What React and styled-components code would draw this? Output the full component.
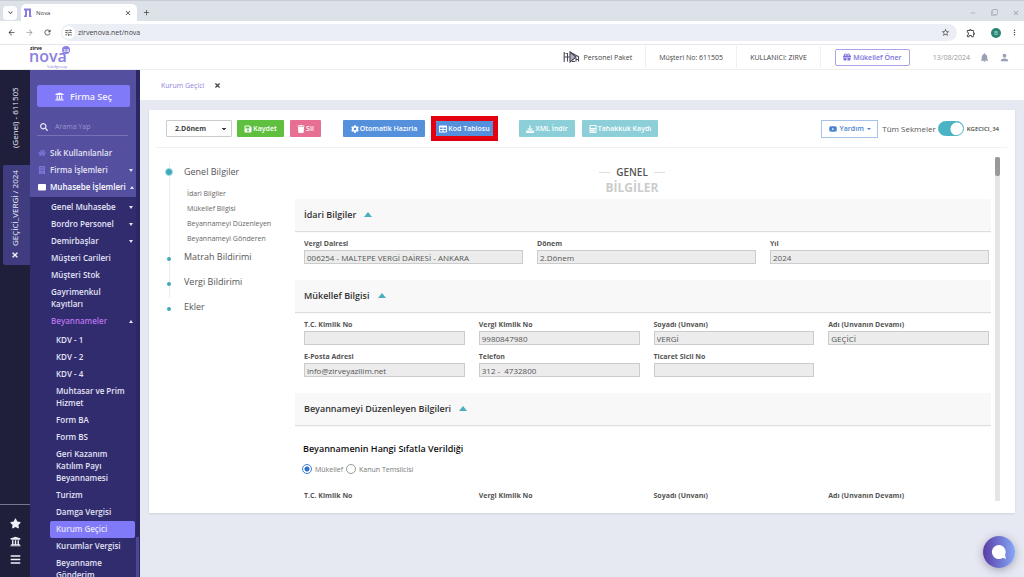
import React from 'react'
import styled, { createGlobalStyle } from 'styled-components'
import {
  FaUniversity, FaSearch, FaHome, FaBuilding, FaSave, FaTrash, FaCog, FaTable, FaYoutube,
  FaGift, FaStar, FaBars, FaTimes, FaCalculator
} from 'react-icons/fa'
import {
  MdArrowBack, MdArrowForward, MdRefresh, MdKeyboardArrowDown, MdClose, MdAdd, MdRemove,
  MdFilterNone, MdStarBorder, MdOutlineExtension, MdMoreVert, MdTune, MdNotifications, MdPerson
} from 'react-icons/md'
import { FaDownload } from 'react-icons/fa6'

const GlobalStyle = createGlobalStyle`
  * {
    box-sizing: border-box;
  }
  body {
    margin: 0;
    font-family: 'Open Sans', sans-serif;
    color: #555;
  }
  button, input, select {
    font-family: inherit;
    margin: 0;
  }
  button {
    cursor: pointer;
    padding: 0;
    border: 0;
    background: none;
    color: inherit;
    white-space: nowrap;
  }
  a {
    color: inherit;
    text-decoration: none;
  }
  svg {
    flex: none;
  }
`

const Page = styled.div`
  display: flex;
  flex-direction: column;
  height: 100vh;
  overflow: hidden;
  background: #e6e9f2;
`

/* browser window */

const TabStrip = styled.div`
  display: flex;
  align-items: center;
  height: 21px;
  padding: 3px 4px 0 3px;
  background: #dde1e8;
  border-top: 1px solid #c9cdd3;
  color: #444;
`

const TabSearch = styled.button`
  display: flex;
  align-items: center;
  justify-content: center;
  width: 14px;
  height: 14px;
  margin-right: 4px;
  border-radius: 4px;
  background: #fdfdff;
  font-size: 9px;
`

const BrowserTab = styled.div`
  display: flex;
  align-items: center;
  gap: 4px;
  width: 116px;
  height: 17px;
  padding: 0 5px 0 3px;
  border-radius: 5px 5px 0 0;
  background: #fff;
  font-size: 6px;

  span {
    flex: 1;
  }
`

const StripButton = styled.button`
  display: flex;
  font-size: ${props => props.size || 9}px;
  color: ${props => props.muted ? '#9a9ea6' : '#444'};
`

const WindowControls = styled.div`
  display: flex;
  gap: 14px;
  margin-left: auto;
`

const NewTab = styled(StripButton)`
  margin-left: 5px;
`

const AddressBar = styled.div`
  display: flex;
  align-items: center;
  gap: 9px;
  height: 24px;
  padding: 0 5px 0 7px;
  background: #fff;
  border-bottom: 1px solid #e4e6ea;
`

const Address = styled.div`
  display: flex;
  align-items: center;
  flex: 1;
  gap: 3px;
  height: 17px;
  padding: 0 7px 0 1px;
  border-radius: 9px;
  background: #eceef6;
  color: #555;
`

const SiteInfo = styled.button`
  display: flex;
  padding: 2px;
  border-radius: 50%;
  background: #fff;
  font-size: 9px;
`

const UrlInput = styled.input`
  flex: 1;
  padding: 0;
  border: 0;
  background: none;
  font-size: 7px;
  color: #444;
`

const Profile = styled.button`
  width: 10px;
  height: 10px;
  margin-left: 6px;
  border-radius: 50%;
  background: #2a8574;
  font-size: 6px;
  line-height: 10px;
  color: #bfe3da;
`

/* application header */

const Header = styled.header`
  display: flex;
  align-items: center;
  flex: none;
  height: 25px;
  padding: 0 14px 0 28px;
  background: #fff;
  border-bottom: 1px solid #eee;
  font-size: 7px;
`

const HeaderItem = styled.div`
  display: flex;
  align-items: center;
  gap: 4px;
  height: 22px;
  padding: 0 13px;
  border-right: 1px solid #f0f0f0;
  color: #444;
`

const Spacer = styled.div`
  flex: 1;
`

const Suggest = styled.button`
  display: flex;
  align-items: center;
  justify-content: center;
  gap: 2px;
  width: 75px;
  height: 17px;
  margin: 0 23px 0 14px;
  border: 1px solid #a9a4e8;
  border-radius: 2px;
  font-size: 7px;
  font-weight: 600;
  color: #7a72de;

  svg {
    font-size: 8px;
  }
`

const Today = styled.span`
  margin-right: 9px;
  color: #999;
`

const HeaderIcon = styled.button`
  display: flex;
  margin-left: ${props => props.gap || 0}px;
  font-size: 11px;
  color: #9aa0b2;
`

/* left side */

const Body = styled.div`
  display: flex;
  flex: 1;
  min-height: 0;
`

const Rail = styled.aside`
  display: flex;
  flex-direction: column;
  flex: none;
  width: 30px;
  background: #201f3b;
  color: #f0f0f8;
`

const RailTab = styled.div`
  display: flex;
  align-items: center;
  justify-content: center;
  gap: 5px;
  height: ${props => props.active ? 100 : 95}px;
  margin-left: 3px;
  padding-left: 3px;
  border-radius: 0 2px 2px 0;
  background: ${props => props.active ? '#403c80' : 'none'};
  writing-mode: vertical-rl;
  transform: rotate(180deg);
  font-size: 8px;
  line-height: 12px;
`

const RailTools = styled.div`
  display: flex;
  flex-direction: column;
  align-items: center;
  gap: 7px;
  height: 73px;
  margin-top: auto;
  padding-top: 13px;
  border-top: 1px solid #77768c;
`

const RailButton = styled.button`
  display: flex;
  font-size: 11px;
`

const Sidebar = styled.nav`
  display: flex;
  flex: none;
  width: 110px;
  background: #302c6e;
  color: #e4e3f5;
  font-size: 8px;
  font-weight: 600;
`

const Menu = styled.div`
  flex: 1;
  min-width: 0;
  overflow: hidden;
`

const MenuTrack = styled.div`
  display: flex;
  align-items: flex-end;
  width: 4px;
  background: #2a2762;
`

const MenuThumb = styled.div`
  width: 3px;
  height: 40px;
  background: #4c4891;
`

const MenuTop = styled.div`
  padding: 15px 0 1px;
  background: #544f9e;
`

const PickCompany = styled.button`
  display: flex;
  align-items: center;
  justify-content: center;
  gap: 6px;
  width: 93px;
  height: 22px;
  margin-left: 7px;
  border-radius: 2px;
  background: #8079f8;
  font-size: 9px;
  font-weight: 600;
  color: #f3f2ff;
`

const SearchBox = styled.label`
  display: flex;
  align-items: center;
  gap: 7px;
  width: 91px;
  height: 18px;
  margin: 11px 0 9px 7px;
  padding: 0 3px;
  border-bottom: 1px solid #7772b8;

  input {
    flex: 1;
    min-width: 0;
    padding: 0;
    border: 0;
    background: none;
    font-size: 7px;
    color: #fff;
  }
  input::placeholder {
    color: #9a96d2;
  }
`

const MenuLink = styled.a`
  display: flex;
  align-items: center;
  gap: 4px;
  padding: 2px 3px 3px ${props => props.indent}px;
  line-height: 12px;
  white-space: nowrap;
  color: ${props => props.open ? '#b873ea' : props.strong ? '#fff' : 'inherit'};

  svg {
    font-size: 8px;
    color: ${props => props.strong ? '#fff' : '#7a74d6'};
  }
`

const MenuText = styled.span`
  white-space: pre-line;
`

const Caret = styled.i`
  width: 0;
  height: 0;
  margin-left: auto;
  border: 2px solid transparent;
  border-top: ${props => props.up ? '0' : '3px solid #e4e3f5'};
  border-bottom: ${props => props.up ? '3px solid #e4e3f5' : '0'};
`

const MenuList = styled.div`
  padding-top: 2px;
`

const SubLink = styled.a`
  display: block;
  margin: 0 1px 0 20px;
  padding: 2px 2px 3px 6px;
  border-radius: 2px;
  line-height: 12px;
  white-space: pre-line;
  background: ${props => props.active ? '#8079f8' : 'none'};
`

/* work area */

const Main = styled.main`
  display: flex;
  flex-direction: column;
  flex: 1;
  min-width: 0;
`

const PageTabs = styled.div`
  display: flex;
  align-items: center;
  gap: 10px;
  height: 30px;
  padding: 0 21px;
  background: #fff;
  font-size: 7px;
  color: #8f83d8;
`

const Card = styled.section`
  margin: 10px 9px 0;
  padding: 0 8px;
  background: #fff;
  box-shadow: 0 1px 2px #cfd2da;
`

const Toolbar = styled.div`
  display: flex;
  align-items: center;
  height: 38px;
  padding: 0 8px 0 9px;
  border-bottom: 1px solid #f1f1f1;
`

const Period = styled.select`
  width: 66px;
  height: 17px;
  margin-right: 5px;
  padding: 0 8px;
  border: 1px solid #ccc;
  border-radius: 1px;
  appearance: none;
  background: linear-gradient(45deg, transparent 50%, #444 50%) 55px 7px / 2px 2px no-repeat,
    linear-gradient(-45deg, transparent 50%, #444 50%) 57px 7px / 2px 2px no-repeat, #fff;
  font-size: 7px;
  font-weight: 700;
  color: #444;
`

const ToolButton = styled.button`
  display: flex;
  align-items: center;
  justify-content: center;
  gap: 1px;
  width: ${props => props.width}px;
  height: 17px;
  margin-right: ${props => props.after || 0}px;
  border-radius: 1px;
  background: ${props => props.color};
  font-size: 7px;
  font-weight: 600;
  color: #fff;

  svg {
    font-size: 8px;
  }
`

const Highlight = styled.div`
  display: flex;
  margin-right: 21px;
  border: 5px solid #e3000f;

  button {
    height: 15px;
  }
`

const HelpButton = styled.button`
  display: flex;
  align-items: center;
  justify-content: center;
  gap: 3px;
  width: 57px;
  height: 18px;
  margin: 0 4px 0 auto;
  border: 1px solid #a5c3e8;
  font-size: 7px;
  font-weight: 600;
  color: #4a83cf;

  svg {
    font-size: 8px;
  }
  i {
    border: 2px solid transparent;
    border-top-color: #4a83cf;
    border-bottom: 0;
  }
`

const SwitchLabel = styled.label`
  display: flex;
  align-items: center;
  gap: 2px;
  font-size: 8px;
  color: #555;
`

const Switch = styled.input`
  appearance: none;
  width: 26px;
  height: 15px;
  margin: 0;
  border: 1px solid #4bb3c3;
  border-radius: 8px;
  background: radial-gradient(circle at 18px 7px, #fff 6px, #4bb3c3 7px);
`

const FormCode = styled.span`
  margin-left: 3px;
  font-size: 6px;
  font-weight: 600;
  color: #444;
`

const Workspace = styled.div`
  display: flex;
  height: 344px;
  margin: 9px 7px 0 8px;
`

const Steps = styled.div`
  flex: none;
  width: 130px;
  padding-top: 6px;
`

const Step = styled.div`
  display: flex;
  gap: 11px;

  &:last-child > div:first-child {
    background: none;
  }
`

const StepLine = styled.div`
  display: flex;
  justify-content: center;
  align-items: flex-start;
  width: 8px;
  background: linear-gradient(#ececec, #ececec) center / 1px 100% no-repeat;

  i {
    width: ${props => props.active ? 8 : 4}px;
    height: ${props => props.active ? 8 : 4}px;
    margin-top: ${props => props.active ? 5 : 9}px;
    border: ${props => props.active ? '1px solid #a5dde4' : '0'};
    border-radius: 50%;
    background: #3fa9b8;
  }
`

const StepBody = styled.div`
  padding-bottom: ${props => props.active ? 2 : 7}px;
`

const StepLink = styled.a`
  display: block;
  font-size: 9px;
  line-height: 18px;
  white-space: nowrap;
`

const StepSub = styled.a`
  display: block;
  padding-left: 3px;
  font-size: 7px;
  line-height: 15px;
  white-space: nowrap;
  color: #666;
`

const StepSubs = styled.div`
  padding-top: 5px;
`

const Form = styled.form`
  flex: 1;
  min-width: 0;
  overflow: hidden;
`

const Title = styled.h1`
  display: flex;
  align-items: center;
  justify-content: center;
  gap: 6px;
  margin: 7px 0 0;
  padding-right: 22px;
  font-size: 10px;
  line-height: 16px;
  font-weight: 600;
  color: #555;

  &::before, &::after {
    content: '';
    width: 11px;
    height: 1px;
    background: #ddd;
  }
`

const Subtitle = styled.p`
  margin: 0 0 3px;
  padding-right: 22px;
  font-size: 12px;
  line-height: 16px;
  font-weight: 700;
  text-align: center;
  color: #ccc;
`

const SectionHead = styled.h2`
  display: flex;
  align-items: center;
  gap: 8px;
  height: 32px;
  margin: 0;
  padding: 0 9px 2px;
  background: #f8f8f8;
  box-shadow: 0 1px 1px #ddd;
  font-size: 9px;
  font-weight: 600;
  color: #333;

  i {
    border: 4px solid transparent;
    border-bottom: 5px solid #4aafbb;
    border-top: 0;
  }
`

const Fields = styled.div`
  display: grid;
  grid-template-columns: repeat(${props => props.columns}, 1fr);
  gap: 5px 14px;
  padding: 6px 2px 16px 9px;
`

const Field = styled.label`
  display: block;
  font-size: 7px;
  line-height: 13px;
  font-weight: 700;
  color: #555;

  input {
    display: block;
    width: 100%;
    height: 14px;
    padding: 0 2px;
    border: 1px solid #ccc;
    background: #ececec;
    font-size: 8px;
    color: #555;
  }
`

const Question = styled.fieldset`
  margin: 0;
  padding: 16px 7px 9px;
  border: 0;
`

const Legend = styled.h3`
  margin: 0 0 7px;
  padding-left: 1px;
  font-size: 9px;
  line-height: 16px;
  font-weight: 600;
  color: #111;
`

const Choices = styled.div`
  display: flex;
  align-items: center;
  gap: 3px;
  font-size: 7px;
  color: #777;

  label {
    display: flex;
    align-items: center;
    gap: 3px;
  }
  input {
    appearance: none;
    width: 10px;
    height: 10px;
    margin: 0;
    border: 1px solid #999;
    border-radius: 50%;
    background: #fff;
  }
  input:checked {
    border-color: #3f7fd6;
    background: radial-gradient(circle, #2f6fd0 2px, #fff 3px);
  }
`

const ScrollTrack = styled.div`
  flex: none;
  width: 5px;
  margin-left: 4px;
  background: #e6e6e6;
`

const ScrollThumb = styled.div`
  height: 19px;
  border-radius: 2px;
  background: #999;
`

const CardFoot = styled.div`
  height: 12px;
`

const ChatButton = styled.button`
  position: fixed;
  right: 9px;
  bottom: 9px;
  display: flex;
  align-items: center;
  justify-content: center;
  width: 32px;
  height: 32px;
  border-radius: 50%;
  background: linear-gradient(90deg, #5a3ca6, #86a8f8);
  box-shadow: 0 2px 8px rgba(60, 60, 90, 0.4);
`

const accounting = [
  { text: 'Genel Muhasebe', caret: true },
  { text: 'Bordro Personel', caret: true },
  { text: 'Demirbaşlar', caret: true },
  { text: 'Müşteri Carileri' },
  { text: 'Müşteri Stok' },
  { text: 'Gayrimenkul\nKayıtları' },
  { text: 'Beyannameler', caret: true, open: true }
]

const declarations = [
  'KDV - 1', 'KDV - 2', 'KDV - 4', 'Muhtasar ve Prim\nHizmet', 'Form BA', 'Form BS',
  'Geri Kazanım\nKatılım Payı\nBeyannamesi', 'Turizm', 'Damga Vergisi', 'Kurum Geçici',
  'Kurumlar Vergisi', 'Beyanname\nGönderim'
]

const steps = [
  { text: 'Genel Bilgiler', subs: ['İdari Bilgiler', 'Mükellef Bilgisi', 'Beyannameyi Düzenleyen', 'Beyannameyi Gönderen'] },
  { text: 'Matrah Bildirimi' },
  { text: 'Vergi Bildirimi' },
  { text: 'Ekler' }
]

const office = [
  ['Vergi Dairesi', '006254 - MALTEPE VERGİ DAİRESİ - ANKARA'],
  ['Dönem', '2.Dönem'],
  ['Yıl', '2024']
]

const taxpayer = [
  ['T.C. Kimlik No', ''],
  ['Vergi Kimlik No', '9980847980'],
  ['Soyadı (Unvanı)', 'VERGİ'],
  ['Adı (Unvanın Devamı)', 'GEÇİCİ'],
  ['E-Posta Adresi', 'info@zirveyazilim.net'],
  ['Telefon', '312 -  4732800'],
  ['Ticaret Sicil No', '']
]

const preparer = [
  ['T.C. Kimlik No', ''],
  ['Vergi Kimlik No', ''],
  ['Soyadı (Unvanı)', ''],
  ['Adı (Unvanın Devamı)', '']
]

const Logo = () => (
  <svg width="44" height="24" viewBox="0 0 44 24" fontFamily="Open Sans, sans-serif">
    <text x="1" y="17" fontSize="16" fontWeight="600" fill="#8a7fe0">nova</text>
    <text x="2" y="5" fontSize="5" fontWeight="700" fill="#222">zirve</text>
    <circle cx="38" cy="5" r="4" fill="#8a7fe0" />
    <text x="38" y="7" fontSize="4" fontWeight="700" fill="#fff" textAnchor="middle">2.0</text>
    <text x="19" y="23" fontSize="4" fill="#8a7fe0">Vakıfgroup</text>
  </svg>
)

const PackageMark = () => (
  <svg width="17" height="12" viewBox="0 0 17 12" fill="none" stroke="#4d4858" strokeWidth="1.1">
    <path d="M1.200 1v10M1.200 1.500l3.300 1v8M1.200 6h5.500" />
    <path d="M7 1v10l6-5z" fill="#b5b0c0" />
    <path d="M7 1l9 5M9 10.500h3M13 7v3.500M15.500 6v4.500M13 8.500h3" />
  </svg>
)

const NovaMark = () => (
  <svg width="8" height="9" viewBox="0 0 8 9" fill="none" stroke="#8a7fe0" strokeWidth="2">
    <path d="M0 8.500h2V1.500h4v7h1.500M0 1.500h4" />
  </svg>
)

const LedgerIcon = () => (
  <svg width="8" height="8" viewBox="0 0 8 8" fill="currentColor">
    <path d="M1 1h6a1 1 0 0 1 1 1v4.500a1 1 0 0 1-1 1H1a1 1 0 0 1-1-1V2a1 1 0 0 1 1-1z" />
  </svg>
)

const FieldGrid = ({ columns, fields }) => (
  <Fields columns={columns}>
    { fields.map(([label, value]) => (
      <Field key={label}>
        {label}
        <input type="text" defaultValue={value} readOnly />
      </Field>
    ))}
  </Fields>
)

const Browser = () => (
  <>
    <TabStrip>
      <TabSearch aria-label="Search tabs"><MdKeyboardArrowDown /></TabSearch>
      <BrowserTab>
        <NovaMark />
        <span>Nova</span>
        <StripButton size={8} aria-label="Close tab"><MdClose /></StripButton>
      </BrowserTab>
      <NewTab aria-label="New tab"><MdAdd /></NewTab>
      <WindowControls>
        <StripButton muted size={8} aria-label="Minimize"><MdRemove /></StripButton>
        <StripButton muted size={7} aria-label="Restore"><MdFilterNone /></StripButton>
        <StripButton muted size={8} aria-label="Close"><MdClose /></StripButton>
      </WindowControls>
    </TabStrip>
    <AddressBar>
      <StripButton aria-label="Back"><MdArrowBack /></StripButton>
      <StripButton muted aria-label="Forward"><MdArrowForward /></StripButton>
      <StripButton aria-label="Reload"><MdRefresh /></StripButton>
      <Address>
        <SiteInfo aria-label="Site information"><MdTune /></SiteInfo>
        <UrlInput aria-label="Address" defaultValue="zirvenova.net/nova" />
        <StripButton aria-label="Bookmark"><MdStarBorder /></StripButton>
      </Address>
      <StripButton size={10} aria-label="Extensions"><MdOutlineExtension /></StripButton>
      <Profile>B</Profile>
      <StripButton aria-label="More"><MdMoreVert /></StripButton>
    </AddressBar>
  </>
)

const SideMenu = () => (
  <Sidebar>
    <Menu>
      <MenuTop>
        <PickCompany><FaUniversity /> Firma Seç</PickCompany>
        <SearchBox>
          <FaSearch />
          <input type="text" placeholder="Arama Yap" aria-label="Arama Yap" />
        </SearchBox>
        <MenuLink href="#" indent={8}><FaHome /> Sık Kullanılanlar</MenuLink>
        <MenuLink href="#" indent={8}><FaBuilding /> Firma İşlemleri <Caret /></MenuLink>
        <MenuLink href="#" indent={8} strong><LedgerIcon /> Muhasebe İşlemleri <Caret up /></MenuLink>
      </MenuTop>
      <MenuList>
        { accounting.map(item => (
          <MenuLink href="#" key={item.text} indent={21} open={item.open}>
            <MenuText>{item.text}</MenuText>
            { item.caret && <Caret up={item.open} /> }
          </MenuLink>
        ))}
      </MenuList>
      <MenuList>
        { declarations.map(text => (
          <SubLink href="#" key={text} active={text === 'Kurum Geçici'}>{text}</SubLink>
        ))}
      </MenuList>
    </Menu>
    <MenuTrack><MenuThumb /></MenuTrack>
  </Sidebar>
)

const TaxForm = () => (
  <Form>
    <Title>GENEL</Title>
    <Subtitle>BİLGİLER</Subtitle>
    <SectionHead>İdari Bilgiler <i /></SectionHead>
    <FieldGrid columns={3} fields={office} />
    <SectionHead>Mükellef Bilgisi <i /></SectionHead>
    <FieldGrid columns={4} fields={taxpayer} />
    <SectionHead>Beyannameyi Düzenleyen Bilgileri <i /></SectionHead>
    <Question>
      <Legend>Beyannamenin Hangi Sıfatla Verildiği</Legend>
      <Choices>
        <label><input type="radio" name="sifat" defaultChecked /> Mükellef</label>
        <label><input type="radio" name="sifat" /> Kanun Temsilcisi</label>
      </Choices>
    </Question>
    <FieldGrid columns={4} fields={preparer} />
  </Form>
)

export default class App extends React.Component {

  renderSteps = () => {
    return steps.map(step => (
      <Step key={step.text}>
        <StepLine active={!!step.subs}><i /></StepLine>
        <StepBody active={!!step.subs}>
          <StepLink href="#">{step.text}</StepLink>
          { step.subs && (
            <StepSubs>
              { step.subs.map(sub => <StepSub href="#" key={sub}>{sub}</StepSub>) }
            </StepSubs>
          )}
        </StepBody>
      </Step>
    ))
  }

  render() {
    return (
      <Page>
        <GlobalStyle />
        <Browser />
        <Header>
          <Logo />
          <Spacer />
          <HeaderItem><PackageMark /> Personel Paket</HeaderItem>
          <HeaderItem>Müşteri No: 611505</HeaderItem>
          <HeaderItem>KULLANICI: ZIRVE</HeaderItem>
          <Suggest><FaGift /> Mükellef Öner</Suggest>
          <Today>13/08/2024</Today>
          <HeaderIcon aria-label="Bildirimler"><MdNotifications /></HeaderIcon>
          <HeaderIcon gap={9} aria-label="Hesap"><MdPerson /></HeaderIcon>
        </Header>
        <Body>
          <Rail>
            <RailTab>(Genel) - 611505</RailTab>
            <RailTab active><FaTimes /> GEÇİCİ_VERGİ / 2024</RailTab>
            <RailTools>
              <RailButton aria-label="Favoriler"><FaStar /></RailButton>
              <RailButton aria-label="Firmalar"><FaUniversity /></RailButton>
              <RailButton aria-label="Menü"><FaBars /></RailButton>
            </RailTools>
          </Rail>
          <SideMenu />
          <Main>
            <PageTabs>
              <a href="#">Kurum Geçici</a>
              <StripButton size={7} aria-label="Kapat"><FaTimes /></StripButton>
            </PageTabs>
            <Card>
              <Toolbar>
                <Period aria-label="Dönem" defaultValue="2">
                  <option value="2">2.Dönem</option>
                </Period>
                <ToolButton width={47} color="#5fbf3f" after={6}><FaSave /> Kaydet</ToolButton>
                <ToolButton width={31} color="#e66f92" after={22}><FaTrash /> Sil</ToolButton>
                <ToolButton width={82} color="#5590dd" after={6}><FaCog /> Otomatik Hazırla</ToolButton>
                <Highlight>
                  <ToolButton width={57} color="#5590dd"><FaTable /> Kod Tablosu</ToolButton>
                </Highlight>
                <ToolButton width={56} color="#8dcfd8" after={7}><FaDownload /> XML İndir</ToolButton>
                <ToolButton width={76} color="#8dcfd8"><FaCalculator /> Tahakkuk Kaydı</ToolButton>
                <HelpButton><FaYoutube /> Yardım <i /></HelpButton>
                <SwitchLabel>
                  Tüm Sekmeler
                  <Switch type="checkbox" defaultChecked />
                </SwitchLabel>
                <FormCode>KGECICI_34</FormCode>
              </Toolbar>
              <Workspace>
                <Steps>{this.renderSteps()}</Steps>
                <TaxForm />
                <ScrollTrack><ScrollThumb /></ScrollTrack>
              </Workspace>
              <CardFoot />
            </Card>
          </Main>
        </Body>
        <ChatButton aria-label="Sohbet">
          <svg width="16" height="16" viewBox="0 0 16 16" fill="#fff">
            <path d="M8 1a7 7 0 1 0 4 12.700L15 15l-1-4A7 7 0 0 0 8 1z" />
          </svg>
        </ChatButton>
      </Page>
    )
  }
}
